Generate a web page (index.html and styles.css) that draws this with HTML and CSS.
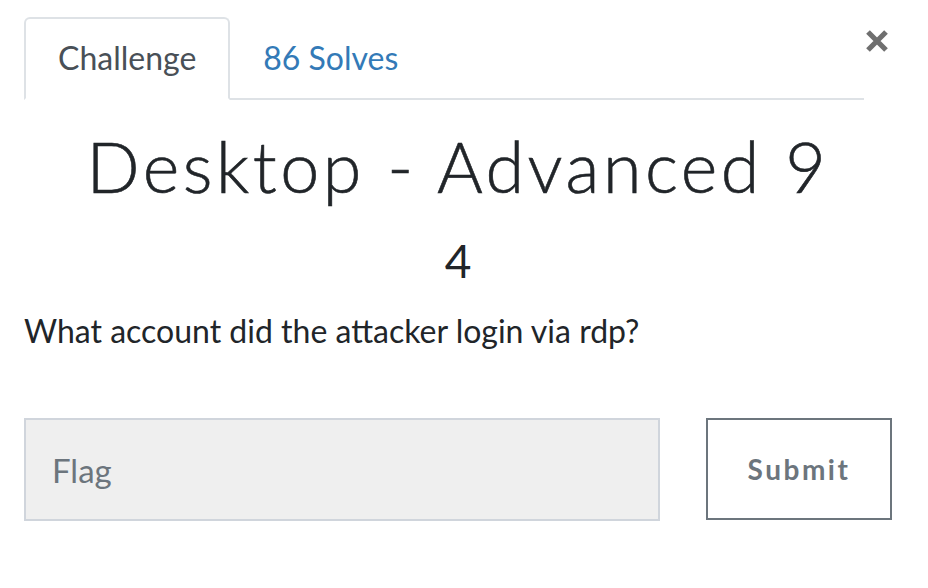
FILE: index.html
```html
<!DOCTYPE html>
<html>
<head>
<meta charset="utf-8">
<link rel="stylesheet" href="styles.css">
</head>
<body>
<div class="modal">
  <div class="header">
    <ul class="tabs">
      <li class="tab active">Challenge</li>
      <li class="tab link">86 Solves</li>
    </ul>
    <button class="close" aria-label="Close">
      <svg width="24" height="24" viewBox="0 0 24 24"><path d="M3 3 L21 21 M21 3 L3 21" stroke="#6f6f6f" stroke-width="5.2" fill="none"/></svg>
    </button>
  </div>
  <h3 class="name">Desktop - Advanced 9</h3>
  <h4 class="value">4</h4>
  <p class="desc">What account did the attacker login via rdp?</p>
  <form class="submit-row">
    <input class="flag" type="text" placeholder="Flag">
    <button class="submit" type="button">Submit</button>
  </form>
</div>
</body>
</html>
```
FILE: styles.css
```css
html, body { margin: 0; padding: 0; background: #fff; }
body { font-family: Lato, "Open Sans", sans-serif; color: #212529; }
.modal { padding: 17px 36px 0 24px; }
.header { display: flex; align-items: flex-start; }
.tabs { flex: 1; display: flex; list-style: none; margin: 0; padding: 0; border-bottom: 2px solid #dee2e6; }
.tab { font-size: 32px; line-height: 36px; padding: 21px 32px 22px; margin-bottom: -2px; border: 2px solid transparent; border-radius: 6px 6px 0 0; }
.tab.active { color: #495057; border-color: #dee2e6 #dee2e6 #fff; background: #fff; }
.tab.link { color: #337ab7; padding-left: 31px; }
.close { width: 28px; height: 40px; padding: 12px 0 0 1px; margin: 0; border: 0; background: none; display: flex; align-items: flex-start; }
.name { font-family: Lato, sans-serif; font-weight: 300; font-size: 70px; line-height: 85px; text-align: center; margin: 24px 0 0; letter-spacing: 3.5px; -webkit-text-stroke: 0.6px #212529; }
.value { font-family: Lato, sans-serif; font-weight: 400; font-size: 46px; line-height: 56px; text-align: center; margin: 24px 0 0; }
.desc { font-size: 32px; line-height: 40px; margin: 22px 0 0; }
.submit-row { display: flex; margin-top: 67px; }
.flag { width: 636px; height: 103px; box-sizing: border-box; border: 2px solid #d0d5dc; background: #efefef; font-family: Lato, sans-serif; font-size: 33px; padding: 0 26px; color: #495057; }
.flag::placeholder { color: #6c757d; }
.submit { margin-left: 46px; width: 186px; height: 102px; box-sizing: border-box; border: 2px solid #6c757d; background: #fff; color: #6c757d; font-family: Lato, sans-serif; font-weight: 700; font-size: 28px; letter-spacing: 2.5px; padding: 0; }
```
